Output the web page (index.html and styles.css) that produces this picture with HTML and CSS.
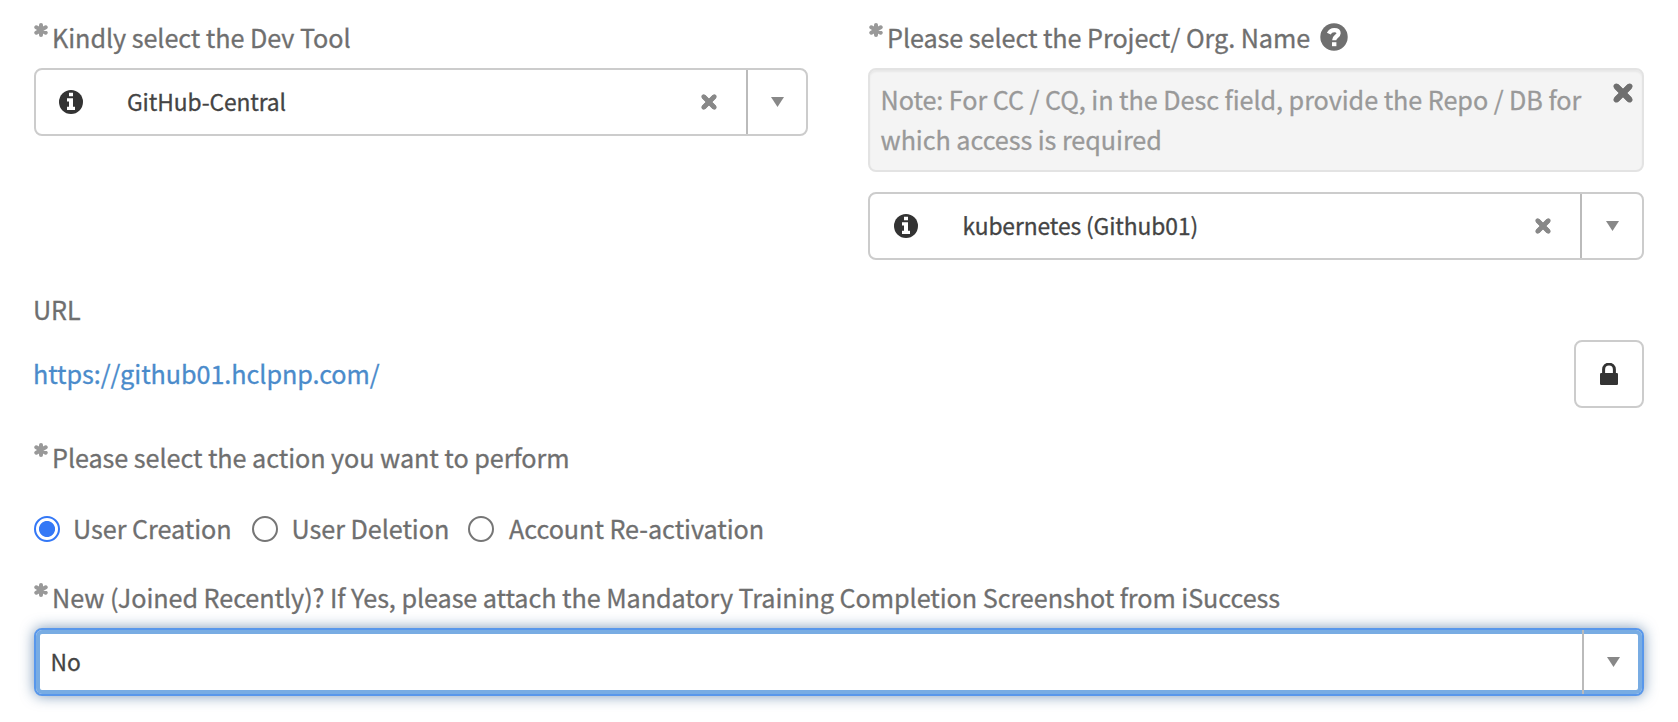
FILE: index.html
```html
<!DOCTYPE html>
<html lang="en">
<head>
<meta charset="utf-8">
<title>Dev Tool Access Request</title>
<link rel="stylesheet" href="styles.css">
</head>
<body>
<svg class="defs" width="0" height="0">
  <symbol id="star" viewBox="0 0 14 14"><path d="M7 2v10M2.3 4.3l9.4 5.4M11.7 4.3L2.3 9.7" stroke="currentColor" stroke-width="4" stroke-linecap="round"/></symbol>
  <symbol id="info" viewBox="0 0 24 24"><circle cx="12" cy="12" r="12" fill="currentColor"/><path d="M10 2.8h4v3.4h-4zM8 8.2h6v8.6h2V20H8v-3.2h2v-5.4H8z" fill="#fff"/></symbol>
  <symbol id="help" viewBox="0 0 28 28"><circle cx="14" cy="14" r="13.7" fill="currentColor"/><path d="M12 19.2h4.4v4H12z" fill="#fff"/><path d="M8.8 10.6c1.2-2.5 3-3.5 5.4-3.5 2.6 0 4.4 1.2 4.4 3.2 0 3-4.4 3-4.4 6.9" fill="none" stroke="#fff" stroke-width="4.2"/></symbol>
  <symbol id="cross" viewBox="0 0 18 18"><path d="M3 3l12 12M15 3L3 15" stroke="currentColor" stroke-width="5.4" stroke-linecap="butt"/><path d="M3 3l12 12M15 3L3 15" stroke="currentColor" stroke-width="5" stroke-linecap="round"/></symbol>
  <symbol id="lock" viewBox="0 0 18 22"><path d="M3.6 11V6.5a5.4 5.4 0 0 1 10.8 0V11" fill="none" stroke="currentColor" stroke-width="3"/><rect y="10" width="18" height="12" rx="1.2" fill="currentColor"/></symbol>
  <symbol id="arrow" viewBox="0 0 13 10"><path d="M0 0h13L6.5 10z" fill="currentColor"/></symbol>
</svg>
<form class="form">
  <div class="pair">
    <div class="field">
      <div class="label"><svg class="star"><use href="#star"/></svg><span>Kindly select the Dev Tool</span></div>
      <div class="select">
        <svg class="info"><use href="#info"/></svg>
        <span class="value">GitHub-Central</span>
        <svg class="clear"><use href="#cross"/></svg>
        <span class="toggle"><svg class="arrow"><use href="#arrow"/></svg></span>
      </div>
    </div>
    <div class="field">
      <div class="label"><svg class="star"><use href="#star"/></svg><span>Please select the Project/ Org. Name</span><svg class="help"><use href="#help"/></svg></div>
      <div class="note"><p>Note: For CC / CQ, in the Desc field, provide the Repo / DB for which access is required</p><svg class="close"><use href="#cross"/></svg></div>
      <div class="select org">
        <svg class="info"><use href="#info"/></svg>
        <span class="value">kubernetes (Github01)</span>
        <svg class="clear"><use href="#cross"/></svg>
        <span class="toggle"><svg class="arrow"><use href="#arrow"/></svg></span>
      </div>
    </div>
  </div>
  <div class="label url-label"><span>URL</span></div>
  <div class="url-row">
    <a class="link">https://github01.hclpnp.com/</a>
    <span class="lock-button"><svg class="lock"><use href="#lock"/></svg></span>
  </div>
  <div class="label action-label"><svg class="star"><use href="#star"/></svg><span>Please select the action you want to perform</span></div>
  <div class="radios">
    <span class="radio checked"></span><span class="option creation">User Creation</span>
    <span class="radio"></span><span class="option deletion">User Deletion</span>
    <span class="radio"></span><span class="option reactivation">Account Re-activation</span>
  </div>
  <div class="label new-label"><svg class="star"><use href="#star"/></svg><span>New (Joined Recently)? If Yes, please attach the Mandatory Training Completion Screenshot from iSuccess</span></div>
  <div class="select focused">
    <span class="value">No</span>
    <span class="toggle"><svg class="arrow"><use href="#arrow"/></svg></span>
  </div>
</form>
</body>
</html>
```
FILE: styles.css
```css
* { box-sizing: border-box; }
body {
  margin: 0;
  background: #fff;
  color: #6f6f6f;
  font-family: "Noto Sans CJK SC", "Noto Sans", sans-serif;
  font-size: 25.2px;
  letter-spacing: -0.06px;
  -webkit-text-stroke: 0.3px currentColor;
}
svg { display: block; flex: none; }
.defs { position: absolute; }
.form { padding: 17px 34px 26px; }
.pair { display: grid; grid-template-columns: 774px 776px; gap: 60px; }
.label { display: flex; height: 40px; line-height: 40px; white-space: nowrap; }
.field .label { margin-bottom: 11px; }
.star { width: 14px; height: 14px; margin: 6px 4.5px 0 -0.5px; color: #999; }
.org-star { margin-left: 0; }
.help { width: 28px; height: 28px; margin: 5.5px 0 0 10px; color: #6f6f6f; }
.field + .field .star { margin-left: 0.5px; }
.select {
  display: flex;
  align-items: center;
  height: 68px;
  border: 2px solid #ccc;
  border-radius: 8px;
  background: #fff;
  color: #444;
  font-size: 22.8px;
  letter-spacing: -0.1px;
}
.info { width: 24px; height: 24px; margin: 0 44px 0 23px; color: #333; }
.value { flex: 1; padding-bottom: 2px; white-space: nowrap; }
.clear { width: 16px; height: 16px; margin-right: 29px; color: #888; }
.toggle {
  display: flex;
  align-items: center;
  justify-content: center;
  width: 60px;
  height: 100%;
  border-left: 2px solid #bbb;
}
.org .info { margin: 0 44.5px 0 24px; }
.org .toggle { width: 62px; }
.arrow { width: 13px; height: 10px; color: #888; }
.note {
  display: flex;
  justify-content: space-between;
  height: 104px;
  margin-bottom: 20px;
  padding: 9px 9px 0 10.5px;
  border: 2px solid #e3e3e3;
  border-radius: 8px;
  background: #f4f4f4;
  box-shadow: inset 0 2px 2px rgba(0, 0, 0, 0.05);
  color: #999;
  line-height: 40px;
}
.note p { width: 712px; margin: 0; }
.close { width: 20px; height: 20px; margin-top: 4px; color: #6f6f6f; }
.url-label { margin-top: 29px; }
.url-label span { margin-left: -1px; }
.url-row { display: flex; align-items: center; justify-content: space-between; height: 68px; margin-top: 11px; }
.link { margin-left: -1px; padding-bottom: 2px; color: #4a8bcb; }
.lock-button { display: grid; place-items: center; width: 70px; height: 68px; border: 2px solid #ccc; border-radius: 8px; color: #333; }
.lock { width: 18px; height: 22px; }
.action-label { margin-top: 29px; }
.radios { display: flex; align-items: center; height: 40px; margin-top: 32px; line-height: 40px; white-space: nowrap; }
.radio { flex: none; width: 26px; height: 26px; margin-right: 13px; border: 2px solid #767676; border-radius: 50%; }
.checked { border-color: #3478f6; background: radial-gradient(circle, #3478f6 7.6px, #fff 8.4px); }
.option { flex: none; padding-bottom: 3px; letter-spacing: -0.05px; }
.creation { width: 179px; }
.deletion { width: 177px; padding-left: 0.5px; }
.reactivation { padding-left: 2px; }
.new-label { margin-top: 28px; }
.focused {
  margin-top: 11px;
  border-color: #5897eb;
  box-shadow: inset 0 0 0 4px #78ace3, 0 0 14px rgba(50, 95, 145, 0.65);
}
.focused .value { padding-left: 14.5px; }
```
